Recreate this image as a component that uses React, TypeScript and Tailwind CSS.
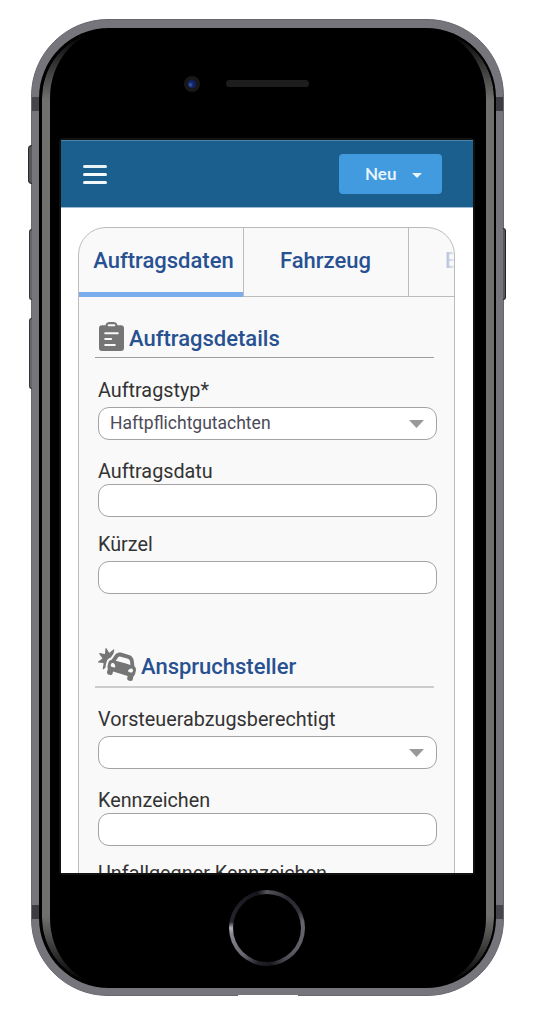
import React from 'react';
import { FaCarCrash } from 'react-icons/fa';

function ClipboardIcon() {
  return (
    <svg viewBox="0 0 25 29" className="mb-px h-[29px] w-[25px] shrink-0" fill="none">
      <path d="M6.500 3.200C7 1 8.500 0 10.500 0h4C16.500 0 18 1 18.500 3.200H22a3 3 0 0 1 3 3V26a3 3 0 0 1-3 3H3A3 3 0 0 1 0 26V6.200A3 3 0 0 1 3 3.200Z" fill="#757575" />
      <path d="M9.700 3.300h5.600M6.200 11.300h12.600M6.200 17h6M6.200 23h9.600" stroke="#f9f9f9" strokeWidth="2" strokeLinecap="round" />
    </svg>
  );
}

function Caret() {
  return (
    <svg viewBox="0 0 15 8" className="h-2 w-[15px]" fill="#999999">
      <path d="M0 0h15L7.500 8Z" />
    </svg>
  );
}

function Field({ value, select = false }: { value?: string; select?: boolean }) {
  return (
    <div className="flex h-[33px] w-[339px] shrink-0 items-center justify-between rounded-[11px] border border-[#a3a3a3] bg-white pr-3 pl-[11px]">
      <span className="text-[17.500px] leading-none text-[#4b4a57]">{value}</span>
      {select && <Caret />}
    </div>
  );
}

function Label({ children }: { children: string }) {
  return <div className="h-6 shrink-0 text-[19.800px] leading-6 whitespace-nowrap text-[#333333]">{children}</div>;
}

const sideButtons = [
  'absolute -left-1 top-[125px] h-[39px] w-1 rounded-l-sm border-y border-l border-[#29292c] bg-[#55555a]',
  'absolute -left-[3px] top-[209px] h-[71px] w-[3px] rounded-l-sm border-y border-l border-[#38383b] bg-[#66656b]',
  'absolute -left-[3px] top-[298px] h-[71px] w-[3px] rounded-l-sm border-y border-l border-[#38383b] bg-[#66656b]',
  'absolute -right-[3px] top-[208px] h-[72px] w-[3px] rounded-r-sm border-y border-r border-[#252528] bg-[#55555a]',
];

const antennaBands = [
  'absolute left-0 top-[77px] h-3.5 w-2 bg-[#45454c]',
  'absolute right-0 top-[77px] h-3.5 w-2 bg-[#3c3c43]',
  'absolute left-0 top-[885px] h-3.5 w-2 bg-[#3c3c43]',
  'absolute right-0 top-[885px] h-3.5 w-2 bg-[#45454c]',
];

export default function App() {
  return (
    <div className="h-[1025px] w-[534px] overflow-hidden bg-white pt-[19px] pl-[31px] font-['Roboto',sans-serif]">
      <div className="relative flex h-[977px] w-[473px] flex-col rounded-[77px] border border-[#68676e] bg-[#76757c] px-[7px] pt-2 pb-[7px]">
        {sideButtons.map((c) => <div key={c} className={c} />)}
        {antennaBands.map((c) => <div key={c} className={c} />)}
        <div className="absolute -bottom-px left-[206px] h-px w-[60px] bg-white" />
        <div className="relative flex flex-1 flex-col rounded-[70px] bg-black pt-[112px] pl-[22px]">
          <div className="absolute inset-x-[2.500px] inset-y-0.5 rounded-[68px] border-x-8 border-[#70706f] [mask-image:linear-gradient(to_bottom,transparent_4px,#000_70px,#000_calc(100%_-_70px),transparent_calc(100%_-_4px))]" />
          <div className="absolute top-12 left-[145px] flex size-4 items-center justify-center rounded-full bg-[#18181a]">
            <div className="size-2 rounded-full bg-[radial-gradient(circle_at_30%_60%,#4462a8_0%,#14276c_35%,#0b1648_100%)]" />
          </div>
          <div className="absolute top-[52px] left-[187px] h-[7px] w-[83px] rounded-full bg-[#1d1d1d]" />

          <div className="relative -mt-0.5 -ml-0.5 w-[416px] rounded-sm border-2 border-[#111112]">
            <div className="flex h-[733px] w-[412px] flex-col overflow-hidden bg-white">
              <header className="flex h-[68px] shrink-0 items-center justify-between border-t border-b border-t-[#4c82a6] border-b-[#9dbbd0] bg-[#1b5f8e] pr-[31px] pl-[22px]">
                <div className="flex flex-col gap-[5px]">
                  <div className="h-[3px] w-6 rounded-xs bg-[#e9f3f5]" />
                  <div className="h-[3px] w-6 rounded-xs bg-[#f4fbff]" />
                  <div className="h-[3px] w-6 rounded-xs bg-[#f1f8fb]" />
                </div>
                <button className="flex h-10 w-[103px] items-center rounded-[4px] bg-[#419bde] pl-[26px] font-['Lato',sans-serif] text-[17px] font-bold text-[#e9f4fc]">
                  <span className="w-[47px] text-left">Neu</span>
                  <svg viewBox="0 0 10 5" className="mt-0.5 h-[5px] w-2.5" fill="#e9f4fc"><path d="M0 0h10L5 5Z" /></svg>
                </button>
              </header>

              <main className="mt-[19px] ml-[17px] flex h-[700px] w-[377px] shrink-0 flex-col overflow-hidden rounded-t-[28px] border border-[#bcbcbc] bg-[#f9f9f9]">
                <nav className="flex h-[69px] shrink-0 text-[22px] font-medium text-[#285192]">
                  <div className="flex w-[164px] shrink-0 items-start justify-center border-b-[5px] border-[#7aadeb] pt-5 pl-[5px] leading-[26px]">Auftragsdaten</div>
                  <div className="flex w-[166px] shrink-0 items-start justify-center border-x border-b border-[#bcbcbc] pt-5 pr-px leading-[26px]">Fahrzeug</div>
                  <div className="flex-1 overflow-hidden border-b border-[#bcbcbc] pt-5 pl-9 leading-[26px]">
                    <span className="bg-linear-to-r from-[#b4bfd7] from-10% to-[#f0f1f5] to-70% bg-clip-text text-transparent">B</span>
                  </div>
                </nav>
                <section className="flex flex-col pl-[19px]">
                  <div className="-ml-[3px] flex h-[61px] w-[339px] items-end gap-[5px] border-b border-[#9d9d9d] pb-[5px] pl-[4px]">
                    <ClipboardIcon />
                    <h2 className="text-[22px] leading-[26px] font-medium text-[#285192]">Auftragsdetails</h2>
                  </div>
                  <div className="mt-[21px]"><Label>Auftragstyp*</Label></div>
                  <div className="mt-1"><Field value="Haftpflichtgutachten" select /></div>
                  <div className="mt-5"><Label>Auftragsdatu</Label></div>
                  <Field />
                  <div className="mt-4"><Label>Kürzel</Label></div>
                  <div className="mt-1"><Field /></div>
                </section>
                <section className="mt-[53px] flex flex-col pl-[19px]">
                  <div className="-ml-[3px] flex h-[41px] w-[339px] items-end gap-[5px] border-b-2 border-[#cccccc] pb-[5px] pl-[3px]">
                    <FaCarCrash className="h-[33px] w-[38px] shrink-0 text-[#757575]" preserveAspectRatio="none" />
                    <h2 className="mb-px text-[22px] leading-[26px] font-medium text-[#285192]">Anspruchsteller</h2>
                  </div>
                  <div className="mt-5"><Label>Vorsteuerabzugsberechtigt</Label></div>
                  <div className="mt-1"><Field select /></div>
                  <div className="mt-5"><Label>Kennzeichen</Label></div>
                  <Field />
                  <div className="mt-4"><Label>Unfallgegner Kennzeichen</Label></div>
                </section>
              </main>
            </div>
          </div>

          <div className="absolute top-[862px] left-[190px] flex size-[76px] items-center justify-center rounded-full bg-[conic-gradient(from_0deg,#55555c_0deg,#292930_35deg,#303037_62deg,#65656e_80deg,#5c5c64_130deg,#4b4b54_150deg,#17171d_175deg,#23232b_195deg,#66666f_220deg,#858590_260deg,#b2b2b5_270deg,#25252d_280deg,#15151b_345deg,#55555c_360deg)]">
            <div className="size-[68px] rounded-full bg-black" />
          </div>
        </div>
      </div>
    </div>
  );
}
